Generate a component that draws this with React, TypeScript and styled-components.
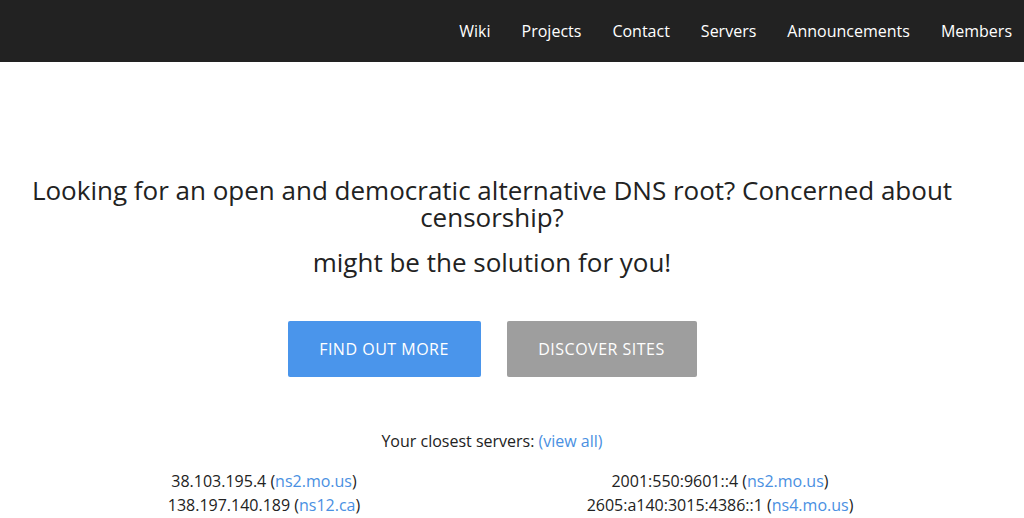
import React from 'react';
import styled, { createGlobalStyle } from 'styled-components';

const GlobalStyle = createGlobalStyle`
  body {
    margin: 0;
    font-family: "Open Sans", "Liberation Sans", sans-serif;
    color: #222;
    background: #fff;
  }
  a {
    color: #4a90e2;
    text-decoration: none;
  }
`;

const Navbar = styled.nav`
  height: 62px;
  background: #222;
  display: flex;
  justify-content: flex-end;
  align-items: center;
  gap: 31px;
  padding-right: 12px;
`;

const NavLink = styled.a`
  color: #fff !important;
  font-size: 16px;
  line-height: 1;
  padding-bottom: 1px;
`;

const Main = styled.main`
  width: 984px;
  display: flex;
  flex-direction: column;
  align-items: center;
  padding-top: 115px;
`;

const Heading = styled.h1`
  margin: 0;
  font-size: 26px;
  font-weight: 400;
  line-height: 27px;
  text-align: center;
`;

const SubHeading = styled.h2`
  margin: 18px 0 0;
  font-size: 26px;
  font-weight: 400;
  line-height: 27px;
  text-align: center;
`;

const Buttons = styled.div`
  display: flex;
  gap: 26px;
  margin-top: 45px;
`;

const Button = styled.a<{ $variant: 'primary' | 'muted' }>`
  display: flex;
  align-items: center;
  justify-content: center;
  height: 56px;
  width: ${(p) => (p.$variant === 'primary' ? '193px' : '190px')};
  border-radius: 2px;
  background: ${(p) => (p.$variant === 'primary' ? '#4a95eb' : '#9e9e9e')};
  color: #fff !important;
  font-size: 16px;
  letter-spacing: 0.5px;
  text-transform: uppercase;
  box-sizing: border-box;
`;

const ServersTitle = styled.p`
  margin: 52px 0 0;
  font-size: 16px;
  line-height: 24px;
`;

const ServerGrid = styled.div`
  display: grid;
  grid-template-columns: 456px 456px;
  margin-top: 16px;
  font-size: 16px;
  line-height: 24px;
  text-align: center;
`;

const ServerColumn = styled.div`
  display: flex;
  flex-direction: column;
`;

const servers = [
  [
    { ip: '38.103.195.4', host: 'ns2.mo.us' },
    { ip: '138.197.140.189', host: 'ns12.ca' },
  ],
  [
    { ip: '2001:550:9601::4', host: 'ns2.mo.us' },
    { ip: '2605:a140:3015:4386::1', host: 'ns4.mo.us' },
  ],
];

const App = () => {
  return (
    <>
      <GlobalStyle />
      <Navbar>
        {['Wiki', 'Projects', 'Contact', 'Servers', 'Announcements', 'Members'].map((item) => (
          <NavLink key={item} href="#">
            {item}
          </NavLink>
        ))}
      </Navbar>
      <Main>
        <Heading>
          Looking for an open and democratic alternative DNS root? Concerned about censorship?
        </Heading>
        <SubHeading>might be the solution for you!</SubHeading>
        <Buttons>
          <Button $variant="primary" href="#">Find out more</Button>
          <Button $variant="muted" href="#">Discover sites</Button>
        </Buttons>
        <ServersTitle>
          Your closest servers: <a href="#">(view all)</a>
        </ServersTitle>
        <ServerGrid>
          {servers.map((col, i) => (
            <ServerColumn key={i}>
              {col.map((s) => (
                <span key={s.ip}>
                  {s.ip} (<a href="#">{s.host}</a>)
                </span>
              ))}
            </ServerColumn>
          ))}
        </ServerGrid>
      </Main>
    </>
  );
};

export default App;
